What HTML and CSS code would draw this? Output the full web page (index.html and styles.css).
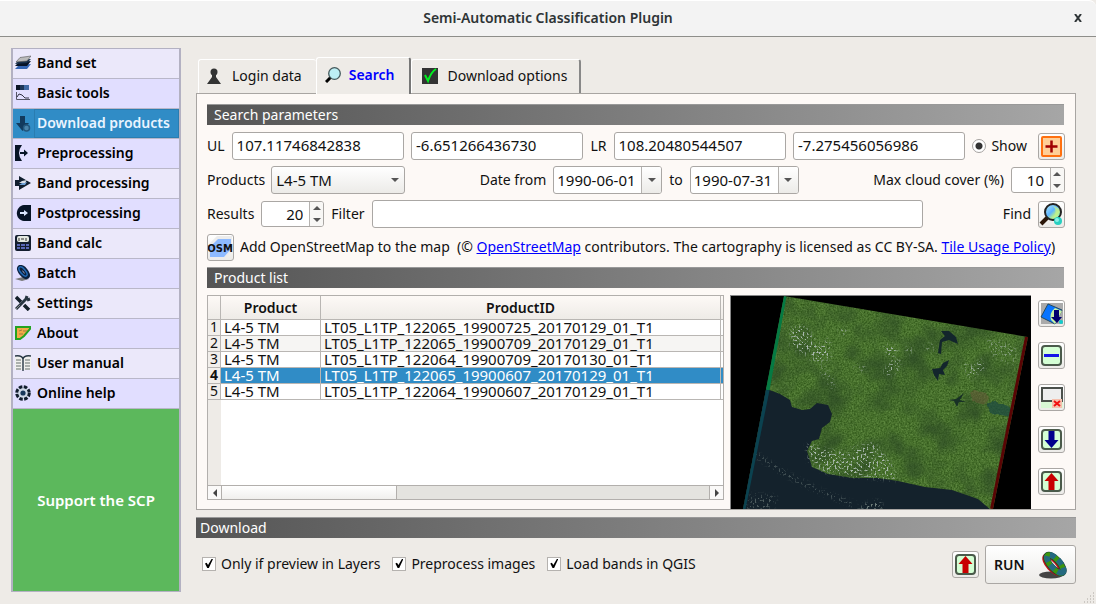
FILE: index.html
```html
<!DOCTYPE html>
<html lang="en">
<head>
<meta charset="utf-8">
<title>Semi-Automatic Classification Plugin</title>
<link rel="stylesheet" href="styles.css">
</head>
<body>
<svg class="defs" width="0" height="0" aria-hidden="true">
  <defs>
    <linearGradient id="lens" x1="0" y1="0" x2="1" y2="1"><stop offset="0" stop-color="#b8f0f8"/><stop offset=".45" stop-color="#5db4ff"/><stop offset=".65" stop-color="#b4ee90"/><stop offset="1" stop-color="#6cf0f0"/></linearGradient>
    <symbol id="up" viewBox="0 0 21 21"><rect x="1" y="1" width="19" height="19" rx="3" fill="#d4ffd4" stroke="#4a5a4a" stroke-width="2"/><path d="M10.500 2l7 8h-4v9h-6v-9h-4z" fill="#c80000"/></symbol>
    <symbol id="down" viewBox="0 0 21 21"><rect x="1" y="1" width="19" height="19" rx="3" fill="#d4ffd4" stroke="#4a5a4a" stroke-width="2"/><path d="M10.500 19l-7-8h4V2h6v9h4z" fill="#00008c"/></symbol>
    <symbol id="ring" viewBox="0 0 30 28">
      <ellipse cx="12" cy="24" rx="12" ry="3.500" fill="#444"/>
      <g fill="none" transform="rotate(48 16 13)">
        <ellipse cx="15" cy="15" rx="11" ry="4.500" stroke="#c01515" stroke-width="5"/>
        <ellipse cx="16" cy="13" rx="11.500" ry="4.500" stroke="#14323c" stroke-width="6.500"/>
        <ellipse cx="16" cy="13" rx="11.500" ry="4.500" stroke="#3c960e" stroke-width="5.500"/>
        <ellipse cx="16" cy="12.500" rx="11.500" ry="4.500" stroke="#246a80" stroke-width="5.500" stroke-dasharray="6 3.500"/>
      </g>
    </symbol>
  </defs>
</svg>

<header class="titlebar">
  <h1 class="title">Semi-Automatic Classification Plugin</h1>
  <button class="close" aria-label="Close"><svg width="8" height="8" viewBox="0 0 8 8"><path d="M1 0l6 8M7 0L1 8" stroke="#2e3436" stroke-width="2"/></svg></button>
</header>

<div class="window">
  <nav class="sidebar">
    <a class="item" href="#"><svg class="ico" viewBox="0 0 16 16"><path d="M0 14l4-4 12-1-4 5z" fill="#3567b5"/><path d="M0 11l4-4 12-1-4 5z" fill="#071427"/><path d="M0 9l4-4 12-1-4 4z" fill="#17304d"/><path d="M1 7l4-4.500L16 1l-4 5z" fill="#bbb" stroke="#555" stroke-width=".6"/></svg>Band set</a>
    <a class="item alt" href="#"><svg class="ico" viewBox="0 0 16 16"><path d="M1 0h4v5H1z" fill="#0a1426"/><path d="M5 0h4v5H5z" fill="#1d3658"/><path d="M9 0h5v5H9z" fill="#416aa5"/><path d="M1.500 7v7.500H15" fill="none" stroke="#556"/><path d="M2 12l2-3 3 1 3 3h4" fill="none" stroke="#334"/></svg>Basic tools</a>
    <a class="item current" href="#" aria-current="page"><svg class="ico" viewBox="0 0 16 16"><path d="M5 0h5v7h4l-6.500 8L1 7h4z" fill="#123a5d"/><circle cx="11.500" cy="12" r="3" fill="#4a84aa" stroke="#23577d" stroke-width="1.500"/></svg><span class="itemtext">Download products</span></a>
    <a class="item alt" href="#"><svg class="ico" viewBox="0 0 16 16"><path d="M0 0h7Q1 8 7 16H0z" fill="#071427"/><path d="M5 7h4V4.500L13 8l-4 3.500V9H5z" fill="#071427"/></svg>Preprocessing</a>
    <a class="item" href="#"><svg class="ico" viewBox="0 0 16 16"><path d="M0 5h4V1l12 7-12 7v-4H0z" fill="#111e2e"/><path d="M4 10l3-2 5-1-2 3z" fill="#6da0d5"/><path d="M4 8l3-2 5-1-2 3z" fill="#d7dde5"/></svg>Band processing</a>
    <a class="item alt" href="#"><svg class="ico" viewBox="0 0 16 16"><path d="M16 0v16H9C-1 15 0 1 9 0z" fill="#071427"/><path d="M5 7h4V5l4 3-4 3V9H5z" fill="#dbe7ff"/></svg>Postprocessing</a>
    <a class="item" href="#"><svg class="ico" viewBox="0 0 16 16"><rect width="16" height="16" rx="2" fill="#131d2e"/><rect x="2" y="1" width="12" height="6" rx="2" fill="#e5e9e2"/><path d="M4 3v3M6 4h3M11 3v3" stroke="#333"/><path d="M2 10h3m1 0h4m1 0h3M2 13h3m1 0h4m1 0h3" stroke="#5967b5" stroke-width="2"/></svg>Band calc</a>
    <a class="item alt" href="#"><svg class="ico" viewBox="0 0 16 16"><path d="M0 14l8-2 6 2-7 2z" fill="#777"/><ellipse cx="8.500" cy="7" rx="6" ry="2.500" transform="rotate(50 8.500 7)" fill="none" stroke="#0b213d" stroke-width="4.500"/><ellipse cx="8" cy="6.500" rx="5.500" ry="2.500" transform="rotate(50 8 6.500)" fill="none" stroke="#216ab7" stroke-width="1.500"/></svg>Batch</a>
    <a class="item" href="#"><svg class="ico" viewBox="0 0 16 16"><path d="M1 2l5 5M9 10l5 5" stroke="#14202a" stroke-width="3.500"/><path d="M1 14L11 4l1-3M12 5l3-1" stroke="#283641" stroke-width="3" fill="none"/><path d="M1 14l4-4" stroke="#888"/></svg>Settings</a>
    <a class="item alt" href="#"><svg class="ico" viewBox="0 0 16 16"><path d="M1 2h14v2l-6 7-4 3H1z" fill="#f4aa47" stroke="#24a322" stroke-width="2"/><path d="M4 6l3-1m1 1h4M4 9h4" stroke="#a37c43"/></svg>About</a>
    <a class="item" href="#"><svg class="ico" viewBox="0 0 16 16"><path d="M0 1h16v14H0z" fill="#f1f1ee"/><path d="M0 1q7-1 8 3 1-4 8-3M8 4v12" fill="none" stroke="#293846" stroke-width="1.400"/><path d="M1 5h5M1 8h5M1 11h5M1 14h5M10 5h5M10 8h5M10 11h5M10 14h5" stroke="#66706e"/></svg>User manual</a>
    <a class="item alt" href="#"><svg class="ico" viewBox="0 0 16 16"><circle cx="8" cy="8" r="6.300" fill="#cfd9e7" stroke="#101c2c" stroke-width="3" stroke-dasharray="3.500 1.450"/><circle cx="8" cy="8" r="2.600" fill="#17375a"/></svg>Online help</a>
    <a class="support" href="#">Support the SCP</a>
  </nav>

  <main class="main">
    <div class="tabs" role="tablist">
      <button class="tab" role="tab"><svg class="ico" viewBox="0 0 16 16"><circle cx="8" cy="4" r="3.500" fill="#333"/><path d="M6 6h4v3l5 7H1l5-7z" fill="#333"/></svg>Login data</button>
      <button class="tab active" role="tab" aria-selected="true"><svg class="ico" viewBox="0 0 16 16"><path d="M1 15l5-5" stroke="#000" stroke-width="3"/><circle cx="9.500" cy="6.500" r="5.800" fill="#bdeff5" stroke="#455a5d" stroke-width="1.300"/></svg>Search</button>
      <button class="tab last" role="tab"><svg class="ico" viewBox="0 0 16 16"><rect width="16" height="16" fill="#333"/><path d="M3 7l3 6Q9 4 14 1" fill="none" stroke="#00f020" stroke-width="2"/></svg>Download options</button>
    </div>

    <section class="panel">
      <h2 class="bar inset">Search parameters</h2>
      <div class="form">
        <div class="row">
          <label for="ulx">UL</label><input class="field grow" id="ulx" value="107.11746842838"><input class="field grow" aria-label="UL Y" value="-6.651266436730">
          <label for="lrx">LR</label><input class="field grow" id="lrx" value="108.20480544507"><input class="field grow" aria-label="LR Y" value="-7.275456056986">
          <label class="check show"><input type="radio" class="radio" checked>Show</label>
          <button class="tool" aria-label="Set area"><svg width="21" height="21" viewBox="0 0 21 21"><rect x="1" y="1" width="19" height="19" rx="1" fill="#ffcf97" stroke="#ff700f" stroke-width="2"/><path d="M10.500 4.500v12M4.500 10.500h12" stroke="#a00000" stroke-width="2.500"/></svg></button>
        </div>
        <div class="row">
          <label for="prod">Products</label>
          <div class="combo"><select class="select" id="prod"><option>L4-5 TM</option></select><i class="tri"></i></div>
          <label class="push" for="from">Date from</label>
          <div class="field date"><input class="bare" id="from" value="1990-06-01"><button class="drop" aria-label="Open from calendar"><i class="tri"></i></button></div>
          <label for="to">to</label>
          <div class="field date"><input class="bare" id="to" value="1990-07-31"><button class="drop" aria-label="Open to calendar"><i class="tri"></i></button></div>
          <label class="push" for="cloud">Max cloud cover (%)</label>
          <div class="field spin small"><input class="bare num" id="cloud" type="number" value="10"><span class="steps"><button class="step" aria-label="Increase"><i class="tri up"></i></button><button class="step" aria-label="Decrease"><i class="tri"></i></button></span></div>
        </div>
        <div class="row">
          <label for="results">Results</label>
          <div class="field spin"><input class="bare num" id="results" type="number" value="20"><span class="steps"><button class="step" aria-label="Increase"><i class="tri up"></i></button><button class="step" aria-label="Decrease"><i class="tri"></i></button></span></div>
          <label for="filter">Filter</label><input class="field grow filter" id="filter">
          <label for="find">Find</label>
          <button class="tool" id="find"><svg width="25" height="25" viewBox="0 0 25 25"><path d="M2 22l8-8" stroke="#2a1608" stroke-width="4"/><circle cx="14" cy="10" r="8" fill="url(#lens)" stroke="#222" stroke-width="2"/><path d="M14 4q5 5 0 12 5 0 6-6 0-5-6-6z" fill="#c5f28a" opacity=".7"/><circle cx="19" cy="19" r="4" fill="#28cfc0"/><circle cx="18" cy="18" r="2" fill="#8af0e8"/></svg></button>
        </div>
        <div class="row osmrow">
          <button class="tool" aria-label="Add OpenStreetMap"><svg width="25" height="25" viewBox="0 0 25 25"><path d="M1 9L9 1h15v15l-8 8H1z" fill="#ececec"/><path d="M2 12l8-8h13v10l-7 8H2z" fill="#8dbaff"/><text x="12" y="17" text-anchor="middle" class="osmtext">OSM</text></svg></button>
          <p class="credit">Add OpenStreetMap to the map &nbsp;(© <a href="#">OpenStreetMap</a> contributors. The cartography is licensed as CC BY-SA. <a href="#">Tile Usage Policy</a>)</p>
        </div>
      </div>

      <h2 class="bar inset">Product list</h2>
      <div class="results">
        <div class="grid">
          <div class="tablewrap">
            <table class="table">
              <colgroup><col class="c0"><col class="c1"><col class="c2"><col></colgroup>
              <thead><tr><th></th><th>Product</th><th>ProductID</th><th></th></tr></thead>
              <tbody>
                <tr><th>1</th><td>L4-5 TM</td><td>LT05_L1TP_122065_19900725_20170129_01_T1</td><td></td></tr>
                <tr class="even"><th>2</th><td>L4-5 TM</td><td>LT05_L1TP_122065_19900709_20170129_01_T1</td><td></td></tr>
                <tr><th>3</th><td>L4-5 TM</td><td>LT05_L1TP_122064_19900709_20170130_01_T1</td><td></td></tr>
                <tr class="selected"><th>4</th><td>L4-5 TM</td><td>LT05_L1TP_122065_19900607_20170129_01_T1</td><td></td></tr>
                <tr><th>5</th><td>L4-5 TM</td><td>LT05_L1TP_122064_19900607_20170129_01_T1</td><td></td></tr>
              </tbody>
            </table>
          </div>
          <div class="scroll"><button class="arrow" aria-label="Scroll left"><i class="tri left"></i></button><div class="track"><div class="thumb"></div></div><button class="arrow" aria-label="Scroll right"><i class="tri right"></i></button></div>
        </div>

        <div class="preview">
          <svg class="scene" viewBox="0 0 300 213" preserveAspectRatio="xMidYMin slice" role="img" aria-label="Satellite preview">
            <defs>
              <filter id="land" x="0" y="0" width="100%" height="100%" color-interpolation-filters="sRGB">
                <feTurbulence type="fractalNoise" baseFrequency=".6" numOctaves="2" seed="4" result="n"/>
                <feColorMatrix in="n" values=".3 0 0 0 .13  .32 0 0 0 .28  .25 0 0 0 .05  0 0 0 0 1" result="f"/>
                <feTurbulence type="fractalNoise" baseFrequency=".035" numOctaves="3" seed="9"/>
                <feColorMatrix values="0 0 0 0 .16  0 0 0 0 .27  0 0 0 0 .14  1.6 0 0 0 -.65" result="m"/>
                <feMerge result="mix"><feMergeNode in="f"/><feMergeNode in="m"/></feMerge>
                <feComposite in="mix" in2="SourceGraphic" operator="in"/>
              </filter>
              <filter id="specks" x="-10%" y="-10%" width="120%" height="120%" color-interpolation-filters="sRGB">
                <feGaussianBlur in="SourceGraphic" stdDeviation="2" result="s"/>
                <feTurbulence type="fractalNoise" baseFrequency=".5" numOctaves="2" seed="3"/>
                <feColorMatrix values="0 0 0 0 .66  0 0 0 0 .72  0 0 0 0 .68  7 0 0 0 -3.8"/>
                <feComposite in2="s" operator="in"/>
              </filter>
              <filter id="rough" x="-10%" y="-10%" width="120%" height="120%"><feTurbulence type="fractalNoise" baseFrequency=".12" numOctaves="2" seed="2"/><feDisplacementMap in="SourceGraphic" scale="6" xChannelSelector="R" yChannelSelector="G"/></filter>
              <clipPath id="tile"><path d="M53 0L297 41l-35 172H12z"/></clipPath>
            </defs>
            <path d="M0 0h300v213H0z"/>
            <g clip-path="url(#tile)">
              <path d="M0 0h300v213H0z" filter="url(#land)"/>
              <path d="M255 108l7-3 15 5 4 4-2 8-18-4z" fill="#1c4a42" opacity=".7" filter="url(#rough)"/>
              <path d="M240 97q12-4 18 4l-4 8-14-4z" fill="#705a3c" opacity=".45" filter="url(#rough)"/>
              <path d="M0 86l36 7 13 5 10 6 2 7 10 3 8-1 7-6 11 2 4 9-2 8-8 6-3 11-7 2-5 10 5 16 16 7 24 4h26l20 3 27 6 27 3 26 9 13 11v8H0z" fill="#14222c"/>
              <path d="M210 35l8 0 7 6 2 7-9-4-7 2-1 12-3-1 2-13 5-4z" fill="#13252c"/>
              <path d="M201 73l8-1 3-5 6-3-2 6-4 4 2 5-6-1-1 7-4-6z" fill="#13252c"/>
              <path d="M217 104l8-1 8-6-4 7 6 2-7 0-2 5-3-6z" fill="#183026"/>
              <g filter="url(#specks)" fill="#fff">
                <path d="M60 32l14-2 14 20 10-8 2 20-14 5-14-10-12-6z"/>
                <path d="M92 68l14 20-4 6-14-20z" opacity=".6"/>
                <path d="M150 50l12-2 6 8-8 6z"/><path d="M152 76l10-12h8l-2 10-10 6z"/><path d="M192 50l10-2v8z"/>
                <path d="M230 66l10 5 12-8 2 8-14 12z"/><path d="M255 42l30 8-2 20-24-12z" opacity=".6"/>
                <path d="M122 70l10-2 2 8zM176 48l6 6-6 6zM108 32l10 2-8 6z"/>
                <path d="M76 148l30 8 36-10 18 20 6 18-44-4-28-4-16-10z"/>
                <path d="M78 150l20 8 24 4 20 18-40-6-20-10z"/>
                <path d="M20 198l26 2-4 13H14z" opacity=".4"/><path d="M135 207l14-2 3 8h-20z" opacity=".7"/>
              </g>
              <path d="M24 158q50 36 116 56" fill="none" stroke="#fff" stroke-width="2" filter="url(#specks)"/>
              <path d="M53 0L36 94" stroke="#057a43" stroke-width="5"/><path d="M36 94L12 213" stroke="#0b4250" stroke-width="5"/>
              <path d="M297 41l-35 172" stroke="#590505" stroke-width="6"/>
            </g>
          </svg>
        </div>

        <div class="tools">
          <button class="tool" aria-label="Download preview"><svg width="23" height="23" viewBox="0 0 23 23"><path d="M1 1h22v21H1z" fill="#aaa"/><path d="M8 2l14 6-7 14L1 15z" fill="#0874ff" stroke="#244b60"/><path d="M15 6l7 3-7 13-4-4q-2-7 4-12z" fill="#c9f2a5"/><path d="M14 8h5v7h3l-5 6-6-6h3z" fill="#00006e"/><circle cx="21" cy="20" r="2" fill="#11cccc"/></svg></button>
          <button class="tool" aria-label="Remove"><svg width="21" height="21" viewBox="0 0 21 21"><rect x="1" y="1" width="19" height="19" rx="3" fill="#d4ffd4" stroke="#4a5a4a" stroke-width="2"/><path d="M3 10.500h15" stroke="#1515e8" stroke-width="3"/></svg></button>
          <button class="tool" aria-label="Clear table"><svg width="23" height="23" viewBox="0 0 23 23"><path d="M1 16h22v6H1z" fill="#d8f7d4"/><rect x="2" y="2" width="20" height="13" fill="#eee" stroke="#4a4f4a" stroke-width="2"/><rect x="12" y="13" width="10" height="9" fill="#f5c0ae"/><path d="M14 15l6 5M20 15l-6 5" stroke="#f01010" stroke-width="2"/></svg></button>
          <button class="tool" aria-label="Import"><svg width="21" height="21"><use href="#down"/></svg></button>
          <button class="tool" aria-label="Export"><svg width="21" height="21"><use href="#up"/></svg></button>
        </div>
      </div>
    </section>

    <h2 class="bar">Download</h2>
    <footer class="actions">
      <label class="check"><input type="checkbox" class="box" checked>Only if preview in Layers</label>
      <label class="check"><input type="checkbox" class="box" checked>Preprocess images</label>
      <label class="check"><input type="checkbox" class="box" checked>Load bands in QGIS</label>
      <button class="tool push" aria-label="Export links"><svg width="21" height="21"><use href="#up"/></svg></button>
      <button class="run">RUN<svg width="30" height="28"><use href="#ring"/></svg></button>
    </footer>
  </main>
  <svg class="grip" width="12" height="12" viewBox="0 0 12 12"><path d="M10 1h1M7 4h1m2 0h1M4 7h1m2 0h1m2 0h1M1 10h1m2 0h1m2 0h1m2 0h1" stroke="#aaa59f"/></svg>
</div>
</body>
</html>
```
FILE: styles.css
```css
* { box-sizing: border-box; }

body {
  margin: 0;
  min-height: 100vh;
  display: flex;
  flex-direction: column;
  background: #eeebe7;
  color: #111;
  font: 14px/20px "Noto Sans", "Open Sans", sans-serif;
}

button, input, select { font: inherit; color: inherit; margin: 0; padding: 0; min-width: 0; }
h1, h2, p { margin: 0; font-size: inherit; font-weight: normal; }
svg { display: block; flex: none; }
.defs { position: absolute; }

.titlebar {
  display: flex;
  align-items: center;
  height: 37px;
  padding: 0 14px 2px 14px;
  background: #f3f3f3;
  border-top: 1px solid #fff;
  border-bottom: 1px solid #8e8e8a;
  border-radius: 0 7px 0 0;
}
.title { flex: 1; padding-left: 8px; text-align: center; color: #2e3436; font-weight: 600; }
.close { display: grid; place-items: center; border: 0; background: none; width: 8px; height: 20px; }

.window { position: relative; flex: 1; display: flex; gap: 15px; padding: 11px 20px 12px 11px; }

.sidebar { width: 170px; flex: none; display: flex; flex-direction: column; border: 2px solid #b3b1c2; border-top-width: 1px; border-bottom-width: 1px; }
.item { display: flex; align-items: center; gap: 6px; height: 30px; padding: 0 0 1px 2px; border-bottom: 1px solid #b9b7c9; background: #ebe8fa; color: #000; font-weight: 600; text-decoration: none; white-space: nowrap; }
.alt { background: #e1deff; }
.current { background: #308cc6; color: #eaf4ff; padding-bottom: 0; gap: 3px; }
.itemtext { flex: 1; padding: 3px 0 4px 2px; border: 1px solid #2a7db1; }
.ico { width: 16px; height: 16px; }
.support { flex: 1; display: grid; place-items: center; background: #5cb85c; color: #fff; font-size: 15px; font-weight: 600; text-decoration: none; }

.main { flex: 1; min-width: 0; display: flex; flex-direction: column; padding-top: 9px; }
.tabs { display: flex; align-items: flex-end; padding-left: 2px; }
.tab { display: flex; align-items: center; gap: 10px; height: 34px; padding: 0 14px 2px 7px; border: 1px solid #fff; border-width: 1px 0 0 1px; border-radius: 3px 3px 0 0; background: #eeebe7; white-space: nowrap; }
.active { position: relative; z-index: 1; height: 37px; gap: 8px; margin-bottom: -1px; padding: 0 14px 2px 8px; border-right: 2px solid #777; color: #00f; font-weight: 600; }
.last { border-right: 2px solid #888; padding: 0 12px 2px 10px; }

.panel { flex: 1; display: flex; flex-direction: column; padding: 10px 10px 0; border: 1px solid #a8a5a2; background: #fdf9f6; }
.bar { flex: none; height: 21px; padding-left: 4px; border-top: 1px solid #999; background: linear-gradient(90deg, #555, #a6a6a6); color: #fff; }
.inset { padding-left: 7px; margin-right: 1px; }

.form { display: flex; flex-direction: column; gap: 6px; padding: 7px 0 6px; }
.row { display: flex; align-items: center; gap: 7px; height: 28px; white-space: nowrap; }
.osmrow { height: 27px; gap: 6px; }
.grow { flex: 1; }
.push { margin-left: auto; }
.field { width: 172px; height: 28px; padding: 0 4px 2px; border: 1px solid #aaa7a4; border-radius: 3px; background: #fff; font-size: 15px; }
.filter { margin-right: 73px; }
.tool { flex: none; display: grid; place-items: center; width: 27px; height: 27px; border: 1px solid #aaa7a4; border-radius: 3px; background: linear-gradient(#fff, #ecebe8); }
.check { display: flex; align-items: center; gap: 5px; }
.show { margin-right: 4px; }
.radio { appearance: none; width: 14px; height: 14px; border: 1px solid #a5a2a0; border-radius: 50%; background: radial-gradient(circle, #333 0 3px, #fff 4px); }

.combo { position: relative; width: 134px; height: 28px; margin-left: -1px; }
.select { appearance: none; width: 100%; height: 28px; padding: 0 4px 1px; border: 1px solid #aaa7a4; border-radius: 3px; background: linear-gradient(#fff, #ecebe8); font-size: 15px; }
.combo .tri { position: absolute; right: 6px; top: 12px; pointer-events: none; }
.tri { width: 0; height: 0; border: 4px solid transparent; border-top: 4px solid #555; border-bottom: 0; }
.tri.up { border-bottom: 4px solid #555; border-top: 0; }
.tri.left { border: 4px solid transparent; border-right: 4px solid #444; border-left: 0; }
.tri.right { border: 4px solid transparent; border-left: 4px solid #444; border-right: 0; }
.date, .spin { display: flex; padding: 0; overflow: hidden; }
.date { width: 109px; }
.spin { width: 63px; height: 26px; }
.small { width: 54px; }
.bare { flex: 1; width: 0; padding: 0 3px 1px; border: 0; background: none; }
.num { appearance: textfield; text-align: right; padding-right: 6px; }
.num::-webkit-inner-spin-button { display: none; }
.drop { display: grid; place-items: center; width: 20px; border: 0; border-left: 1px solid #b5b2af; background: linear-gradient(#fff, #ecebe8); }
.steps { display: flex; flex-direction: column; width: 14px; border-left: 1px solid #b5b2af; }
.step { flex: 1; display: grid; place-items: center; border: 0; background: #f8f7f5; }

.osmtext { font: bold 10px "DejaVu Sans", sans-serif; fill: #111; }
.credit { flex: 1; min-width: 0; margin-right: 6px; padding-bottom: 2px; overflow: hidden; }
.credit a { color: #00f; }

.results { flex: 1; display: flex; padding-top: 7px; }
.grid { flex: 1; min-width: 0; display: flex; flex-direction: column; margin: 0 6px 9px 0; border: 1px solid #b2afac; background: #fff; }
.tablewrap { flex: 1; overflow: hidden; background: linear-gradient(90deg, #eeebe7 13px, #fff 13px); }
.table { width: 100%; table-layout: fixed; border-collapse: separate; border-spacing: 0; line-height: 14px; }
.c0 { width: 13px; }
.c1 { width: 100px; }
.c2 { width: 400px; }
.table th, .table td { height: 16px; padding: 0; border: 1px solid #b9b6b3; border-width: 0 1px 1px 0; white-space: nowrap; vertical-align: top; }
.table td { padding-left: 3px; font-size: 15px; }
.table thead th { height: 24px; background: linear-gradient(#fdf9f6, #eeebe7); font-weight: 600; vertical-align: middle; }
.table tbody th { font-weight: normal; background: #f2efeb; }
.table th:last-child, .table td:last-child { border-right: 0; }
.even td { background: #f6f5f3; }
.selected td { background: #308cc6; color: #fff; }
.table .selected th { font-weight: bold; }

.scroll { display: flex; height: 14px; border-top: 1px solid #b2afac; }
.arrow { display: grid; place-items: center; width: 13px; border: 0; background: #faf9f8; }
.track { flex: 1; border: 1px solid #b2afac; border-width: 0 1px; background: #e4e3df; }
.thumb { width: 36%; height: 100%; border-right: 1px solid #b2afac; background: linear-gradient(#fff, #f0efed); }

.preview { flex: none; width: 301px; display: flex; border: 1px solid #888; border-width: 1px 0 0 1px; background: #000; }
.scene { flex: 1; width: 100%; height: 213px; }
.tools { display: flex; flex-direction: column; gap: 15px; padding: 5px 0 0 7px; }

.panel + .bar { margin-top: 7px; }
.actions { display: flex; align-items: center; gap: 12px; padding: 7px 0 8px 6px; }
.actions .check { padding-bottom: 2px; }
.box { appearance: none; width: 14px; height: 14px; border: 1px solid #b5b2af; background: #fff; display: grid; place-items: center; }
.box:checked::before { content: ""; width: 8px; height: 9px; background: #000; clip-path: polygon(0 50%, 20% 42%, 38% 68%, 82% 0, 100% 0, 48% 100%, 28% 100%); }
.run { display: flex; align-items: center; justify-content: space-between; width: 91px; height: 39px; margin-left: -6px; padding: 0 6px 0 8px; border: 1px solid #aaa7a4; border-radius: 3px; background: linear-gradient(#fff, #ecebe8); font-weight: 600; }
.grip { position: absolute; right: 1px; bottom: 0; }
```
